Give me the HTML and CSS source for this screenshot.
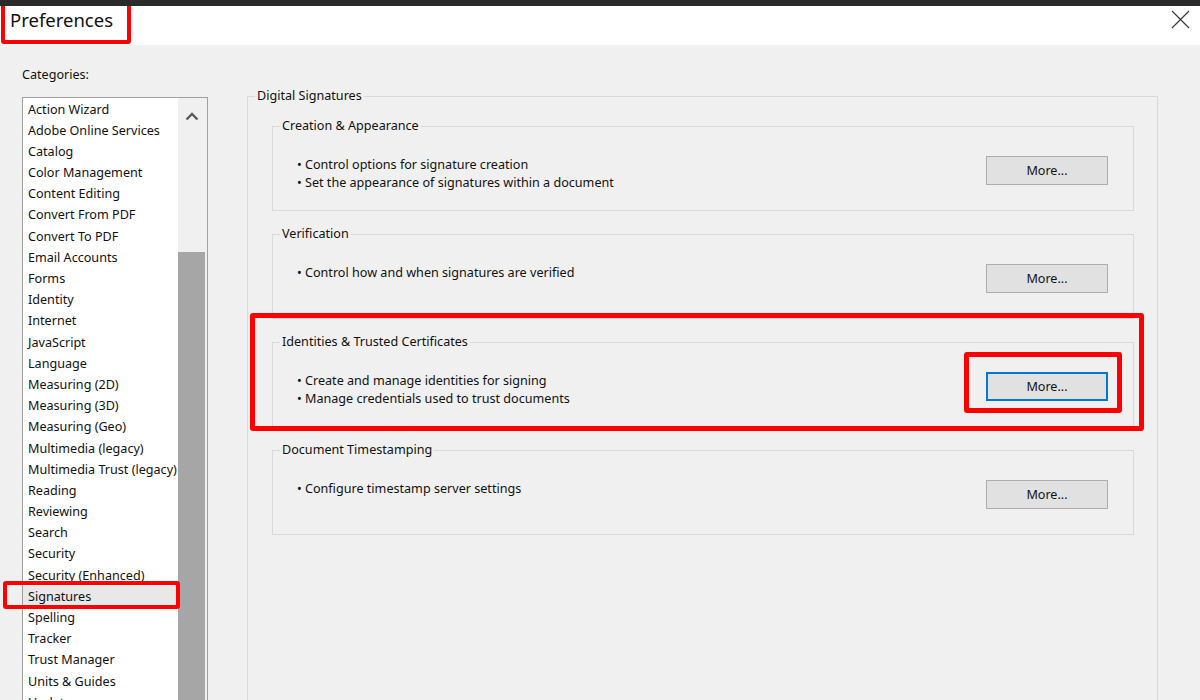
FILE: index.html
```html
<!DOCTYPE html>
<html lang="en">
<head>
<meta charset="utf-8">
<title>Preferences</title>
<link rel="stylesheet" href="styles.css">
</head>
<body>
<div class="topbar"></div>
<header class="titlebar">
  <h1 class="title">Preferences</h1>
  <button class="close" aria-label="Close">
    <svg width="19" height="19" viewBox="0 0 19 19"><path d="M1 1 L18 18 M18 1 L1 18" stroke="#3a3a3a" stroke-width="1.2" fill="none"/></svg>
  </button>
</header>
<main class="body">
  <aside class="cats">
    <div class="cats-label">Categories:</div>
    <div class="listbox">
      <ul class="items">
        <li class="item">Action Wizard</li>
        <li class="item">Adobe Online Services</li>
        <li class="item">Catalog</li>
        <li class="item">Color Management</li>
        <li class="item">Content Editing</li>
        <li class="item">Convert From PDF</li>
        <li class="item">Convert To PDF</li>
        <li class="item">Email Accounts</li>
        <li class="item">Forms</li>
        <li class="item">Identity</li>
        <li class="item">Internet</li>
        <li class="item">JavaScript</li>
        <li class="item">Language</li>
        <li class="item">Measuring (2D)</li>
        <li class="item">Measuring (3D)</li>
        <li class="item">Measuring (Geo)</li>
        <li class="item">Multimedia (legacy)</li>
        <li class="item">Multimedia Trust (legacy)</li>
        <li class="item">Reading</li>
        <li class="item">Reviewing</li>
        <li class="item">Search</li>
        <li class="item">Security</li>
        <li class="item">Security (Enhanced)</li>
        <li class="item selected">Signatures</li>
        <li class="item">Spelling</li>
        <li class="item">Tracker</li>
        <li class="item">Trust Manager</li>
        <li class="item">Units &amp; Guides</li>
        <li class="item">Updater</li>
      </ul>
      <div class="scrollbar">
        <div class="sb-btn">
          <svg width="14" height="9" viewBox="0 0 14 9"><path d="M1.5 7.5 L7 2 L12.5 7.5" stroke="#5a5a5a" stroke-width="2.4" fill="none"/></svg>
        </div>
        <div class="sb-track"></div>
        <div class="sb-thumb"></div>
      </div>
    </div>
  </aside>
  <section class="panel">
    <fieldset class="outer">
      <legend class="legend">Digital Signatures</legend>
      <div class="outer-inner">
        <fieldset class="group">
          <legend class="legend">Creation &amp; Appearance</legend>
          <div class="row">
            <ul class="bullets">
              <li>• Control options for signature creation</li>
              <li>• Set the appearance of signatures within a document</li>
            </ul>
            <button class="more">More...</button>
          </div>
        </fieldset>
        <fieldset class="group">
          <legend class="legend">Verification</legend>
          <div class="row">
            <ul class="bullets">
              <li>• Control how and when signatures are verified</li>
            </ul>
            <button class="more">More...</button>
          </div>
        </fieldset>
        <fieldset class="group">
          <legend class="legend">Identities &amp; Trusted Certificates</legend>
          <div class="row">
            <ul class="bullets">
              <li>• Create and manage identities for signing</li>
              <li>• Manage credentials used to trust documents</li>
            </ul>
            <button class="more focused">More...</button>
          </div>
        </fieldset>
        <fieldset class="group">
          <legend class="legend">Document Timestamping</legend>
          <div class="row">
            <ul class="bullets">
              <li>• Configure timestamp server settings</li>
            </ul>
            <button class="more">More...</button>
          </div>
        </fieldset>
      </div>
    </fieldset>
  </section>
</main>
<span class="mark mark-title"></span>
<span class="mark mark-sig"></span>
<span class="mark mark-group"></span>
<span class="mark mark-button"></span>
</body>
</html>
```
FILE: styles.css
```css
html, body {
  margin: 0;
  padding: 0;
}
body {
  width: 1200px;
  height: 700px;
  overflow: hidden;
  background: #f0f0f0;
  font-family: "Noto Sans", "Open Sans", sans-serif;
  font-size: 12.6px;
  color: #111;
  position: relative;
}
.topbar {
  height: 6px;
  background: #2b2b2b;
  position: relative;
  z-index: 3;
}
.titlebar {
  height: 39px;
  background: #fff;
  display: flex;
  justify-content: space-between;
  align-items: flex-start;
  padding: 0 10px 0 10px;
}
.title {
  margin: 0;
  font-weight: 400;
  font-size: 18.5px;
  line-height: 28px;
  color: #111;
}
.close {
  margin-top: 4px;
  padding: 0;
  border: 0;
  background: none;
  width: 19px;
  height: 19px;
  display: flex;
}
.body {
  display: flex;
  align-items: flex-start;
}
.cats {
  padding: 21px 0 0 22px;
  width: 186px;
}
.cats-label {
  line-height: 18px;
  height: 18px;
  margin-bottom: 13px;
}
.listbox {
  display: flex;
  width: 186px;
  height: 620px;
  box-sizing: border-box;
  border: 1px solid #a0a0a0;
  background: #fff;
}
.items {
  list-style: none;
  margin: 0;
  padding: 0.5px 0 0 0;
  width: 155px;
  overflow: hidden;
  white-space: nowrap;
}
.item {
  line-height: 21.2px;
  height: 21.2px;
  padding-left: 5px;
}
.item.selected {
  background: #e8e8e8;
}
.scrollbar {
  width: 29px;
  background: #f0f0f0;
  display: flex;
  flex-direction: column;
}
.sb-btn {
  height: 36px;
  display: flex;
  justify-content: center;
  align-items: center;
  padding-right: 2px;
}
.sb-track {
  height: 118px;
}
.sb-thumb {
  flex: 1;
  width: 27px;
  background: #a6a6a6;
}
.panel {
  margin-left: 39px;
  padding-top: 41px;
}
fieldset {
  margin: 0;
  padding: 0;
  min-width: 0;
}
.legend {
  padding: 0 2px;
  margin-left: 7px;
  line-height: 20px;
  color: #111;
}
.outer {
  width: 911px;
  height: 640px;
  box-sizing: border-box;
  border: 1px solid #d9d9d9;
}
.outer-inner {
  padding: 10px 23px 0 24px;
  display: flex;
  flex-direction: column;
  gap: 13px;
}
.group {
  height: 95px;
  box-sizing: border-box;
  border: 1px solid #d9d9d9;
}
.row {
  display: flex;
  justify-content: space-between;
  align-items: flex-start;
  padding: 20px 25px 0 24px;
}
.bullets {
  list-style: none;
  margin: 0;
  padding: 0;
}
.bullets li {
  line-height: 18px;
}
.more {
  margin-top: 0;
  width: 122px;
  height: 29px;
  box-sizing: border-box;
  background: #e1e1e1;
  border: 1px solid #adadad;
  font-family: inherit;
  font-size: 12.6px;
  color: #111;
  padding: 0;
}
.more.focused {
  border: 2px solid #0078d7;
}
.mark {
  position: absolute;
  box-sizing: border-box;
  border: 4px solid #ff0000;
  border-radius: 3px;
  z-index: 2;
}
.mark-title {
  left: 1px;
  top: 2px;
  width: 130px;
  height: 42px;
}
.mark-sig {
  left: 3px;
  top: 581px;
  width: 177px;
  height: 28px;
}
.mark-group {
  left: 250px;
  top: 313px;
  width: 894px;
  height: 118px;
  border-width: 5px;
}
.mark-button {
  left: 964px;
  top: 352px;
  width: 158px;
  height: 61px;
  border-width: 5px;
}
```
